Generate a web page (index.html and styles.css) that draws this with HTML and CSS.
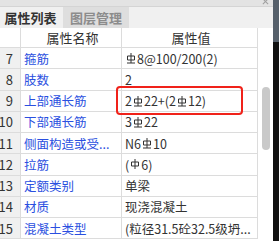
FILE: index.html
```html
<!DOCTYPE html>
<html lang="zh">
<head>
<meta charset="utf-8">
<link rel="stylesheet" href="styles.css">
</head>
<body>
<div class="screen">
<div class="panel">
  <div class="topbar"><svg class="close" viewBox="0 0 8 8"><path d="M1 1l6 6M7 1l-6 6"/></svg></div>
  <div class="tabs">
    <div class="tab active">属性列表</div>
    <div class="tab">图层管理</div>
  </div>
  <div class="body">
    <div class="grid">
      <div class="row head"><div class="num"></div><div class="name">属性名称</div><div class="val">属性值</div></div>
      <div class="row"><div class="num">7</div><div class="name">箍筋</div><div class="val"><svg class="sym" viewBox="0 0 10 12"><path d="M5 1v10M1.5 4h7v4h-7zM1 11h8"/></svg>8@100/200(2)</div></div>
      <div class="row"><div class="num">8</div><div class="name">肢数</div><div class="val">2</div></div>
      <div class="row"><div class="num">9</div><div class="name">上部通长筋</div><div class="val">2<svg class="sym" viewBox="0 0 10 12"><path d="M5 1v10M1.5 4h7v4h-7zM1 11h8"/></svg>22+(2<svg class="sym" viewBox="0 0 10 12"><path d="M5 1v10M1.5 4h7v4h-7zM1 11h8"/></svg>12)</div></div>
      <div class="row"><div class="num">10</div><div class="name">下部通长筋</div><div class="val">3<svg class="sym" viewBox="0 0 10 12"><path d="M5 1v10M1.5 4h7v4h-7zM1 11h8"/></svg>22</div></div>
      <div class="row"><div class="num">11</div><div class="name">侧面构造或受...</div><div class="val">N6<svg class="sym" viewBox="0 0 10 12"><path d="M5 1v10M1.5 4h7v4h-7zM1 11h8"/></svg>10</div></div>
      <div class="row"><div class="num">12</div><div class="name">拉筋</div><div class="val">(<svg class="sym" viewBox="0 0 10 12"><path d="M5 1v10M1.5 4h7v4h-7z"/></svg>6)</div></div>
      <div class="row"><div class="num">13</div><div class="name">定额类别</div><div class="val">单梁</div></div>
      <div class="row"><div class="num">14</div><div class="name">材质</div><div class="val">现浇混凝土</div></div>
      <div class="row"><div class="num">15</div><div class="name">混凝土类型</div><div class="val">(粒径31.5砼32.5级坍...</div></div>
      <div class="highlight"></div>
    </div>
    <div class="scroll"><div class="thumb"></div></div>
  </div>
</div>
<div class="edge"></div>
</div>
</body>
</html>
```
FILE: styles.css
```css
* { box-sizing: border-box; }
html, body { margin: 0; padding: 0; }
body {
  width: 279px;
  height: 241px;
  overflow: hidden;
  background: #fff;
  font-family: "Noto Sans CJK SC", "Noto Sans", sans-serif;
  font-size: 12px;
  color: #333;
}
.screen { display: flex; height: 241px; }
.panel { flex: 1; display: flex; flex-direction: column; min-width: 0; }
.topbar {
  height: 7px;
  background: #e3e3e3;
  position: relative;
  border-bottom: 1px solid #d4d4d4;
}
.close {
  position: absolute;
  right: 4px;
  top: -2px;
  width: 7px;
  height: 7px;
  fill: none;
  stroke: #a0a0a0;
  stroke-width: 1.2;
}
.tabs {
  height: 21px;
  background: #f0f0f0;
  display: flex;
  gap: 2px;
}
.tab {
  width: 61px;
  display: flex;
  align-items: center;
  justify-content: center;
  font-size: 13px;
  font-weight: bold;
  color: #8c8c8c;
  background: #dedede;
}
.tab.active { background: #f0f0f0; color: #333; }
.tab + .tab { width: 66px; }
.body { flex: 1; display: flex; min-height: 0; }
.grid { width: 258px; position: relative; }
.row {
  display: grid;
  grid-template-columns: 21px 101px 136px;
  height: 21.25px;
  border-bottom: 1px solid #dcdcdc;
}
.row > div {
  display: flex;
  align-items: center;
  white-space: nowrap;
  overflow: hidden;
  border-right: 1px solid #dcdcdc;
}
.row.head { height: 20px; }
.row.head > div { justify-content: center; color: #333; font-size: 13px; }
.row.head .num { background: #fff; }
.num {
  background: #f0f0f0;
  justify-content: flex-end;
  padding-right: 7px;
  font-size: 13px;
}
.name { padding-left: 3px; color: #2a4fe0; font-size: 12.5px; }
.val { padding-left: 3px; color: #333; font-size: 12.5px; }
.sym {
  width: 10px;
  height: 12px;
  margin: 0 1px;
  fill: none;
  stroke: #333;
  stroke-width: 1;
}
.highlight {
  position: absolute;
  left: 116px;
  top: 58px;
  width: 127px;
  height: 29px;
  border: 2px solid #f0221a;
  border-radius: 4px;
}
.scroll { flex: 1; position: relative; }
.thumb {
  position: absolute;
  left: 4px;
  top: 59px;
  width: 8px;
  height: 63px;
  background: #c9c9c9;
  border-radius: 4px;
}
.edge {
  width: 6px;
  background: linear-gradient(#56606b 0, #56606b 42px, #111 42px);
}
```
